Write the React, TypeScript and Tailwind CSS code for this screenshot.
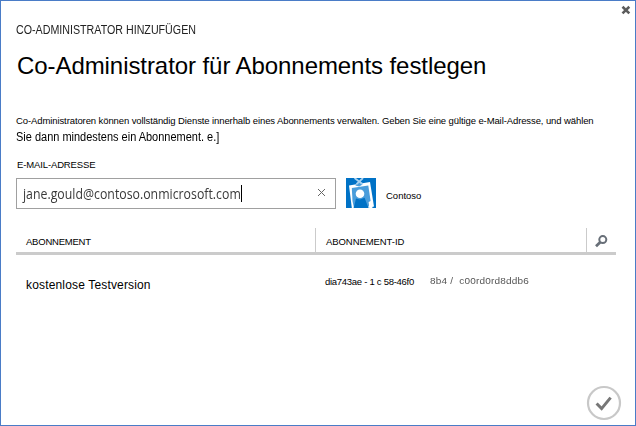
import React from "react";

function CloseIcon() {
  return (
    <svg className="block" width="10" height="10" viewBox="0 0 10 10">
      <path d="M1.5 1.8 8.3 8.4M8.3 1.8 1.5 8.4" stroke="#5c5c5c" strokeWidth="2.6" />
    </svg>
  );
}

function BadgeIcon() {
  return (
    <svg className="block" width="30" height="30" viewBox="0 0 30 30">
      <rect width="30" height="30" fill="#0072c6" />
      <path d="M3 7.5 24 4 28 28.5 22 30H5.8Z" fill="#fff" />
      <path d="M5.8 10 22.3 7.4 24.6 23 22 30H8L6.5 23Z" fill="#4a9ddb" />
      <path d="M7.6 30 10 20.5 14 21.5 18.6 19.8 22.5 30Z" fill="#0072c6" />
      <path d="M22.6 24 24.8 23 26.5 30H23.4Z" fill="#fff" />
      <circle cx="14" cy="15.8" r="4.3" fill="#fff" />
      <path d="M9.3 7.6 13 4.2 16.6 6.6 13.2 8.4Z" fill="#4a9ddb" />
      <path d="M8.5 0 16.5 6M17 0 10.5 6.2" stroke="#a9d2f0" strokeWidth="1.8" />
    </svg>
  );
}

function SearchIcon() {
  return (
    <svg className="block" width="13" height="13" viewBox="0 0 13 13">
      <circle cx="7.8" cy="4.6" r="3.5" fill="none" stroke="#686f78" strokeWidth="2" />
      <path d="M5.2 7.2 1 11.2" stroke="#686f78" strokeWidth="2.8" />
    </svg>
  );
}

function ConfirmIcon() {
  return (
    <svg className="block" width="36" height="36" viewBox="0 0 36 36">
      <circle cx="18" cy="18" r="16" fill="none" stroke="#c8c8c8" strokeWidth="2.2" />
      <path d="M10.6 18.5 15.6 23.6 24.6 12.6" fill="none" stroke="#777" strokeWidth="3" />
    </svg>
  );
}

export default function App() {
  return (
    <div className="flex h-[426px] w-[636px] flex-col border border-[#4a7cc7] bg-white font-['Liberation_Sans',Arial,sans-serif] whitespace-nowrap text-black">
      <div className="flex h-[21px] justify-end pt-1 pr-[4px]">
        <button className="h-[10px] w-[10px]" aria-label="Schließen"><CloseIcon /></button>
      </div>
      <header className="pl-[15px]">
        <div className="h-7 text-[12px] leading-4 text-[#222]"><span className="inline-block origin-left scale-x-[0.89]">CO-ADMINISTRATOR HINZUFÜGEN</span></div>
        <h1 className="pl-px text-[24px] leading-8 tracking-[-0.07px]"><span>Co-Administrator für Abonnements festlegen</span></h1>
      </header>
      <div className="flex flex-col pt-[31px] pl-[15px]">
        <p className="text-[9.5px] leading-4 tracking-[-0.1px]"><span>Co-Administratoren können vollständig Dienste innerhalb eines Abonnements verwalten. Geben Sie eine gültige e-Mail-Adresse, und wählen</span></p>
        <p className="text-[12px] leading-4"><span className="inline-block origin-left scale-x-[0.915]">Sie dann mindestens ein Abonnement. e.]</span></p>
        <label className="mt-3 pl-px text-[9.5px] leading-4 tracking-[-0.13px]"><span>E-MAIL-ADRESSE</span></label>
        <div className="mt-[5px] flex h-[31px] items-center">
          <div className="flex h-[31px] w-80 items-center border border-[#a0a0a0] pl-[6px]">
            <span className="w-[218px] font-['Open_Sans','Noto_Sans',sans-serif] text-[14px] leading-5 text-[#3a3a3a]">
              <span className="inline-block origin-left scale-x-[0.88]">jane.gould@contoso.onmicrosoft.com</span>
            </span>
            <span className="h-[17px] w-px bg-black" />
            <svg className="mr-[9px] ml-auto mb-[3px] block" width="9" height="9" viewBox="0 0 9 9">
              <path d="M1 1 8 8M8 1 1 8" stroke="#666" strokeWidth="1" />
            </svg>
          </div>
          <div className="ml-[10px] h-[30px] w-[30px] self-start"><BadgeIcon /></div>
          <span className="mt-[4px] ml-[10px] text-[9.5px] leading-4">Contoso</span>
        </div>
      </div>
      <div className="mt-[19px] ml-[15px] w-[600px]">
        <div className="flex h-[27px] border-b-3 border-[#cbcbcb] text-[9.5px] leading-4">
          <div className="w-[299px] pt-[6px] pl-[10px] tracking-[-0.22px]"><span>ABONNEMENT</span></div>
          <div className="w-[271px] border-l border-[#cbcbcb] pt-[6px] pl-[10px] tracking-[-0.07px]"><span>ABONNEMENT-ID</span></div>
          <div className="flex-1 border-l border-[#cbcbcb] pt-[7px] pl-[8px]"><SearchIcon /></div>
        </div>
        <div className="flex pt-[19px]">
          <div className="w-[309px] pt-[3px] pl-[10px] text-[12px] leading-4 tracking-[0.16px]"><span>kostenlose Testversion</span></div>
          <div className="w-[105px] text-[9.5px] leading-4 tracking-[-0.28px]"><span>dia743ae - 1 c 58-46f0</span></div>
          <div className="-mt-px text-[10px] leading-4 tracking-[0.2px] text-[#555] blur-[0.5px]"><span className="inline-block scale-y-90">8b4 /&nbsp; c00rd0rd8ddb6</span></div>
        </div>
      </div>
      <div className="mt-auto flex justify-end pr-[13px] pb-1">
        <button className="h-9 w-9" aria-label="Bestätigen"><ConfirmIcon /></button>
      </div>
    </div>
  );
}
